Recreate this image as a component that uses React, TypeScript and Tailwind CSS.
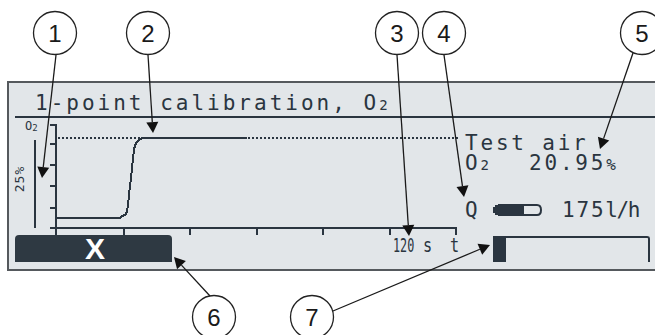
import React from 'react';

const INK = '#2a3540';

type Callout = { n: number; cx: number; cy: number; from: [number, number]; tip: [number, number] };

const callouts: Callout[] = [
  { n: 1, cx: 55, cy: 33, from: [56, 55], tip: [42, 178] },
  { n: 2, cx: 148, cy: 33, from: [148, 55], tip: [153, 133] },
  { n: 3, cx: 397, cy: 33, from: [397, 55], tip: [409, 236] },
  { n: 4, cx: 444, cy: 33, from: [444, 55], tip: [464, 197] },
  { n: 5, cx: 642, cy: 33, from: [633, 53], tip: [600, 149] },
  { n: 6, cx: 214, cy: 317, from: [210, 296], tip: [174, 257] },
  { n: 7, cx: 312, cy: 317, from: [333, 311], tip: [490, 245] },
];

const Leader = ({ from, tip }: { from: [number, number]; tip: [number, number] }) => {
  const dx = tip[0] - from[0];
  const dy = tip[1] - from[1];
  const len = Math.hypot(dx, dy);
  const ux = dx / len;
  const uy = dy / len;
  const bx = tip[0] - ux * 11;
  const by = tip[1] - uy * 11;
  const pts = `${tip[0]},${tip[1]} ${bx - uy * 6},${by + ux * 6} ${bx + uy * 6},${by - ux * 6}`;
  return (
    <g>
      <line x1={from[0]} y1={from[1]} x2={bx} y2={by} stroke="#1a1a1a" strokeWidth={1.3} />
      <polygon points={pts} fill="#111" />
    </g>
  );
};

const Chart = () => {
  const ticksY = [143, 164, 185, 207];
  const ticksX = [123, 189, 256, 322, 389, 455];
  return (
    <svg width={451} height={117} viewBox="9 118 451 117" shapeRendering="crispEdges" className="shrink-0">
      <text x={25} y={130} fontSize={12} fill={INK} fontFamily="DejaVu Sans Mono, monospace">
        O<tspan fontSize={9} dy={1}>2</tspan>
      </text>
      <text
        x={20}
        y={183}
        fontSize={13}
        fill={INK}
        fontFamily="DejaVu Sans Mono, monospace"
        textAnchor="middle"
        letterSpacing={1}
        transform="rotate(-90 20 179)"
      >
        25%
      </text>
      <rect x={34} y={140} width={2} height={88} fill={INK} />
      {/* y axis with top bracket */}
      <rect x={50} y={124} width={7} height={2} fill={INK} />
      <rect x={55} y={124} width={2} height={111} fill={INK} />
      {ticksY.map((y) => (
        <rect key={y} x={50} y={y} width={6} height={2} fill={INK} />
      ))}
      {/* x axis */}
      <rect x={50} y={227} width={407} height={2} fill={INK} />
      {ticksX.map((x) => (
        <rect key={x} x={x} y={227} width={2} height={8} fill={INK} />
      ))}
      {/* target level */}
      <line x1={58} y1={138} x2={141} y2={138} stroke={INK} strokeWidth={2} strokeDasharray="2 2" />
      <line x1={248} y1={138} x2={460} y2={138} stroke={INK} strokeWidth={2} strokeDasharray="2 2" />
      <polyline
        points="57,218 120,218 122,216 125,215 127,212 128,205 129,195 130,186 131,178 132,168 133,158 134,150 135,145 137,142 140,139 143,138 247,138"
        fill="none"
        stroke={INK}
        strokeWidth={2}
      />
    </svg>
  );
};

const FlowIcon = () => (
  <svg width={50} height={12} viewBox="0 0 50 12" shapeRendering="crispEdges">
    <rect x={0} y={3} width={3} height={6} fill={INK} />
    <rect x={2} y={1} width={4} height={10} fill={INK} />
    <rect x={5} y={0} width={26} height={12} fill={INK} />
    <path d="M31 1 H44 Q48 1 48 6 Q48 11 44 11 H31" fill="none" stroke={INK} strokeWidth={2} shapeRendering="auto" />
  </svg>
);

export default function App() {
  return (
    <div className="relative w-[655px] h-[335px] bg-white overflow-hidden">
      <div className="pt-[81px] pl-[7px]">
        <div
          className="w-[660px] h-[190px] border-t-2 border-l-2 border-b-2 border-[#55595d] bg-[#e2e6e9] text-[#2a3540]"
          style={{ fontFamily: '"DejaVu Sans Mono", monospace' }}
        >
          <div className="h-[33px] pt-[10px] pl-[26px] text-[21px] leading-[21px] tracking-[3px] whitespace-pre">
            1-point calibration, O<span className="text-[14px]">2</span>
          </div>
          <div className="ml-[6px] border-b-2 border-[#2a3540]" />

          <div className="flex">
            <Chart />
            <div className="pl-[5px] pt-[15px] text-[21px] leading-[20px] tracking-[2.8px] whitespace-pre">
              <div>Test air</div>
              <div className="flex">
                <span className="w-[64px]">
                  O<span className="text-[14px] tracking-[1px]">2</span>
                </span>
                <span>
                  20.95<span className="text-[16px]">%</span>
                </span>
              </div>
              <div className="mt-[25px] flex items-center">
                <span className="w-[28px]">Q</span>
                <FlowIcon />
                <span className="ml-[19px] tracking-[1.8px]">175</span>
                <span className="tracking-[-1.5px]">l/h</span>
              </div>
            </div>
          </div>

          <div className="flex items-start">
            <div className="ml-[6px] w-[157px] h-[27px] rounded-t-[4px] bg-[#2e3942] flex items-center justify-center">
              <span className="ml-[3px] text-white text-[30px] leading-none font-bold" style={{ fontFamily: '"Liberation Sans", sans-serif' }}>
                X
              </span>
            </div>
            <div className="ml-[221px] flex pt-[1px] text-[19px] leading-[19px] whitespace-nowrap">
              <span className="w-[30px]">
                <span className="inline-block origin-left scale-x-[0.62]">120</span>
              </span>
              <span className="w-[27px]">
                <span className="inline-block origin-left scale-x-[0.8]">s</span>
              </span>
              <span className="w-[8px]">
                <span className="inline-block origin-left scale-x-[0.8]">t</span>
              </span>
            </div>
            <div className="ml-[35px] mt-[1px] w-[157px] h-[26px] flex border-t-2 border-r-2 border-[#2a3540] rounded-tr-[3px]">
              <div className="w-[13px] bg-[#2a3540]" />
            </div>
          </div>
        </div>
      </div>

      <svg className="absolute inset-0 pointer-events-none" width={655} height={335} viewBox="0 0 655 335">
        {callouts.map((c) => (
          <g key={c.n}>
            <circle cx={c.cx} cy={c.cy} r={21.5} fill="white" stroke="#222" strokeWidth={1.3} />
            <text
              x={c.cx}
              y={c.cy + 8.5}
              textAnchor="middle"
              fontSize={24}
              fill="#1a1a1a"
              fontFamily="Liberation Sans, Arial, sans-serif"
            >
              {c.n}
            </text>
            <Leader from={c.from} tip={c.tip} />
          </g>
        ))}
      </svg>
    </div>
  );
}
